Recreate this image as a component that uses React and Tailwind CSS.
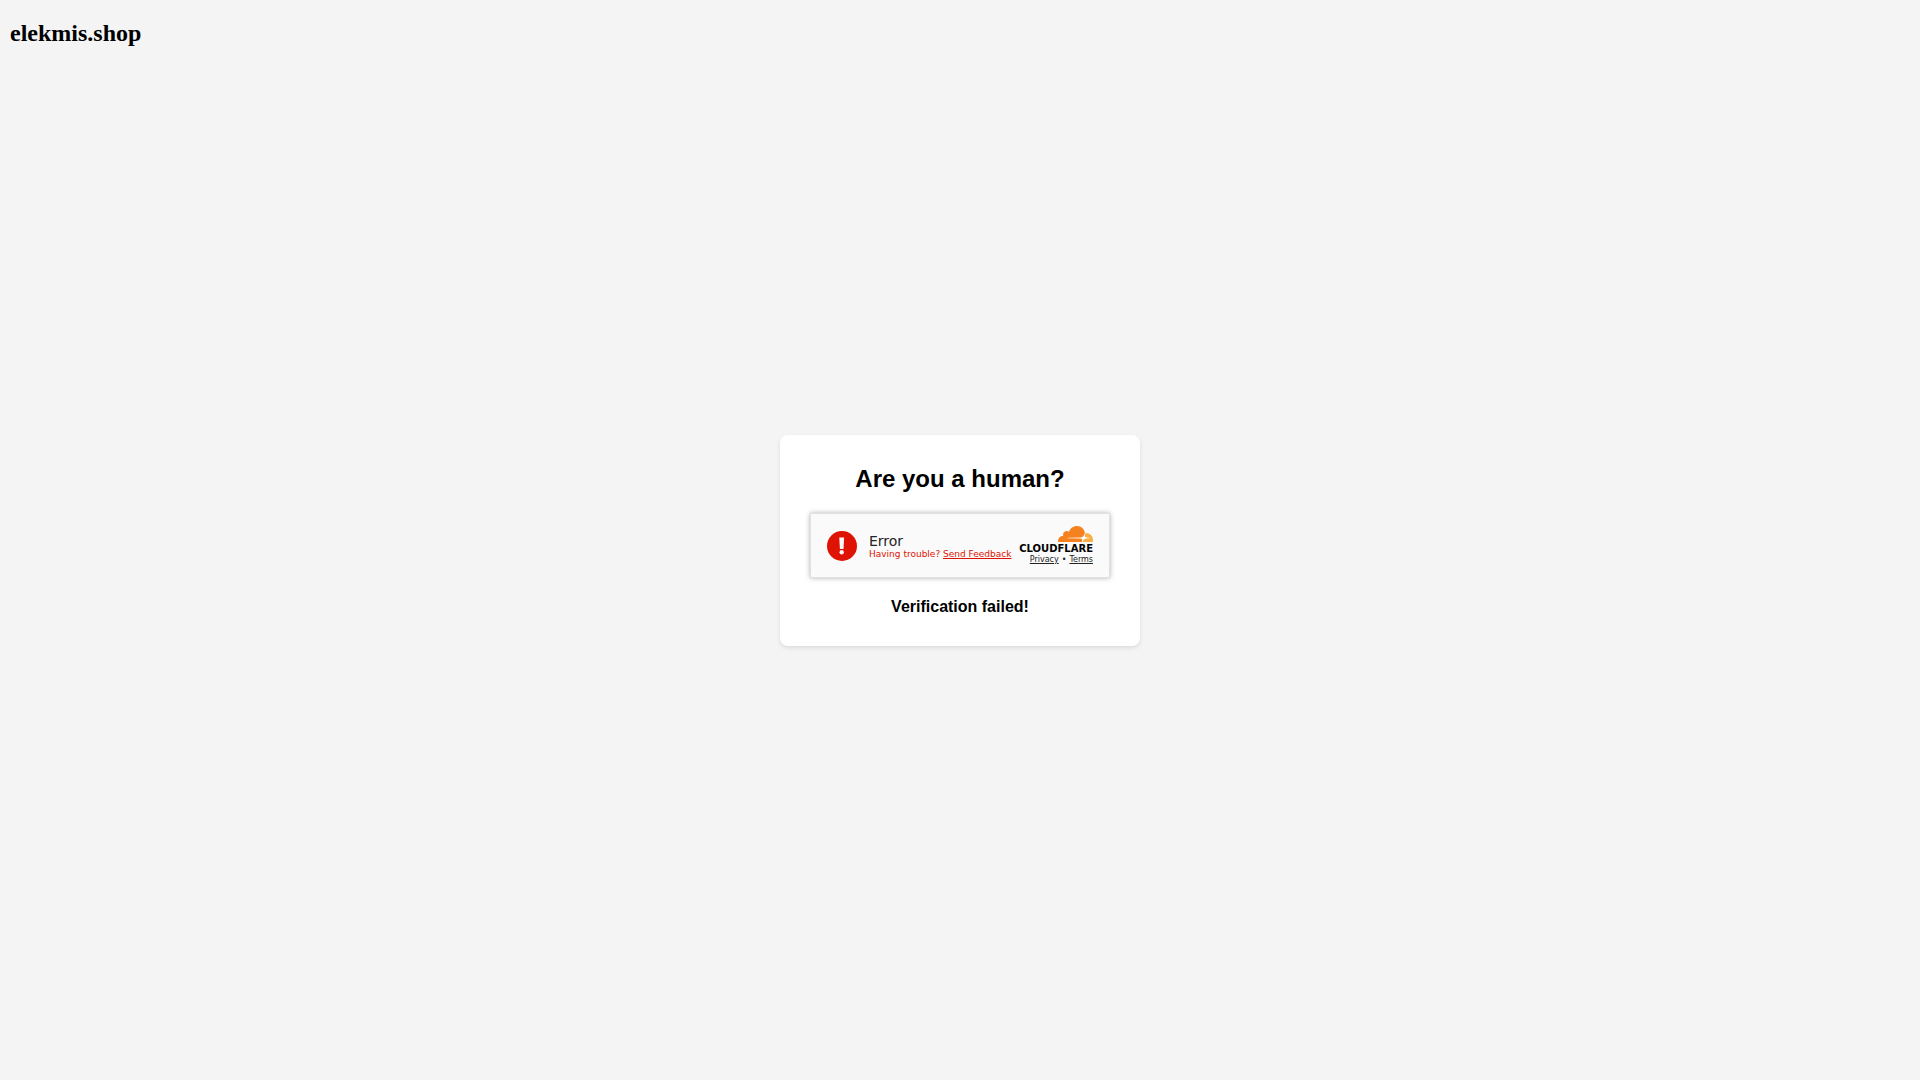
import React from 'react';

const CloudIcon = () => (
  <svg
    width="35"
    height="16"
    viewBox="38 0 35 16"
    fill="none"
    aria-hidden="true"
    className="block shrink-0"
  >
    <path
      fill="#f6821f"
      d="M61.88 15.78l.18-.62c.21-.75.13-1.44-.22-1.94-.33-.47-.88-.74-1.54-.77l-12.58-.17a.25.25 0 0 1-.2-.1.25.25 0 0 1-.03-.23.33.33 0 0 1 .3-.23l12.69-.16c1.51-.07 3.14-1.31 3.71-2.83l.72-1.92a.45.45 0 0 0 .02-.25C64.11 2.81 60.81 0 56.87 0c-3.64 0-6.73 2.38-7.84 5.69a3.76 3.76 0 0 0-2.61-.73 3.78 3.78 0 0 0-3.22 4.69c-2.85.08-5.14 2.45-5.14 5.37 0 .26.02.52.06.77.02.12.12.21.24.22l23.23 0c.13 0 .25-.09.29-.23Z"
    />
    <path
      fill="#fbad41"
      d="M66.08 6.95c-.12 0-.24 0-.35.01a.22.22 0 0 0-.18.15l-.5 1.73c-.21.75-.13 1.44.22 1.94.33.47.88.74 1.54.77l2.69.17c.08 0 .15.04.19.1.04.07.05.15.02.23a.33.33 0 0 1-.29.23l-2.79.16c-1.51.07-3.14 1.31-3.71 2.83l-.2.53c-.04.1.03.2.14.2h9.6a.26.26 0 0 0 .25-.18c.17-.61.25-1.24.25-1.88 0-3.86-3.08-6.99-6.88-6.99Z"
    />
  </svg>
);

const ErrorIcon = () => (
  <svg
    width="30"
    height="30"
    viewBox="0 0 30 30"
    fill="none"
    aria-hidden="true"
    className="block shrink-0"
  >
    <circle cx="15" cy="15" r="15" fill="#de1303" />
    <path d="M12.3 6.5h4.8l-.6 11.6h-3.6z" fill="#f9f9f9" />
    <circle cx="14.7" cy="21.2" r="2.2" fill="#f9f9f9" />
  </svg>
);

const Turnstile = () => (
  <div className="flex h-[65px] w-[300px] items-center justify-between border border-[#e0e0e0] bg-[#fafafa] px-4 pt-px font-['DejaVu_Sans',sans-serif] text-[#232323] shadow-[0_0_5px_rgba(0,0,0,0.3)]">
    <div className="flex items-center gap-3">
      <ErrorIcon />
      <div role="alert" className="text-left whitespace-nowrap">
        <p className="text-sm leading-4">Error</p>
        <p className="text-[9px] leading-[10px] text-[#de1303]">
          Having trouble?{' '}
          <a href="#feedback" className="underline">
            Send Feedback
          </a>
        </p>
      </div>
    </div>
    <div className="flex flex-col items-end">
      <CloudIcon />
      <span className="text-[10px] leading-[13px] font-bold text-black">CLOUDFLARE</span>
      <div className="flex gap-[3px] text-[8px] leading-[10px]">
        <a href="#privacy" className="underline">
          Privacy
        </a>
        <span>•</span>
        <a href="#terms" className="underline">
          Terms
        </a>
      </div>
    </div>
  </div>
);

const App = () => {
  return (
    <div className="grid h-screen grid-rows-[1fr_auto_1fr] bg-[#f4f4f4] text-black">
      <h1 className="px-2.5 py-5 font-['Liberation_Serif',serif] text-2xl leading-[26px] font-bold">
        elekmis.shop
      </h1>
      <main className="mx-auto rounded-lg bg-white p-[30px] text-center font-['Liberation_Sans',sans-serif] shadow-[0_2px_4px_rgba(0,0,0,0.1)]">
        <h2 className="mb-5 text-2xl leading-7 font-bold">Are you a human?</h2>
        <Turnstile />
        <p className="mt-5 text-base leading-[18px] font-bold">Verification failed!</p>
      </main>
    </div>
  );
};

export default App;
